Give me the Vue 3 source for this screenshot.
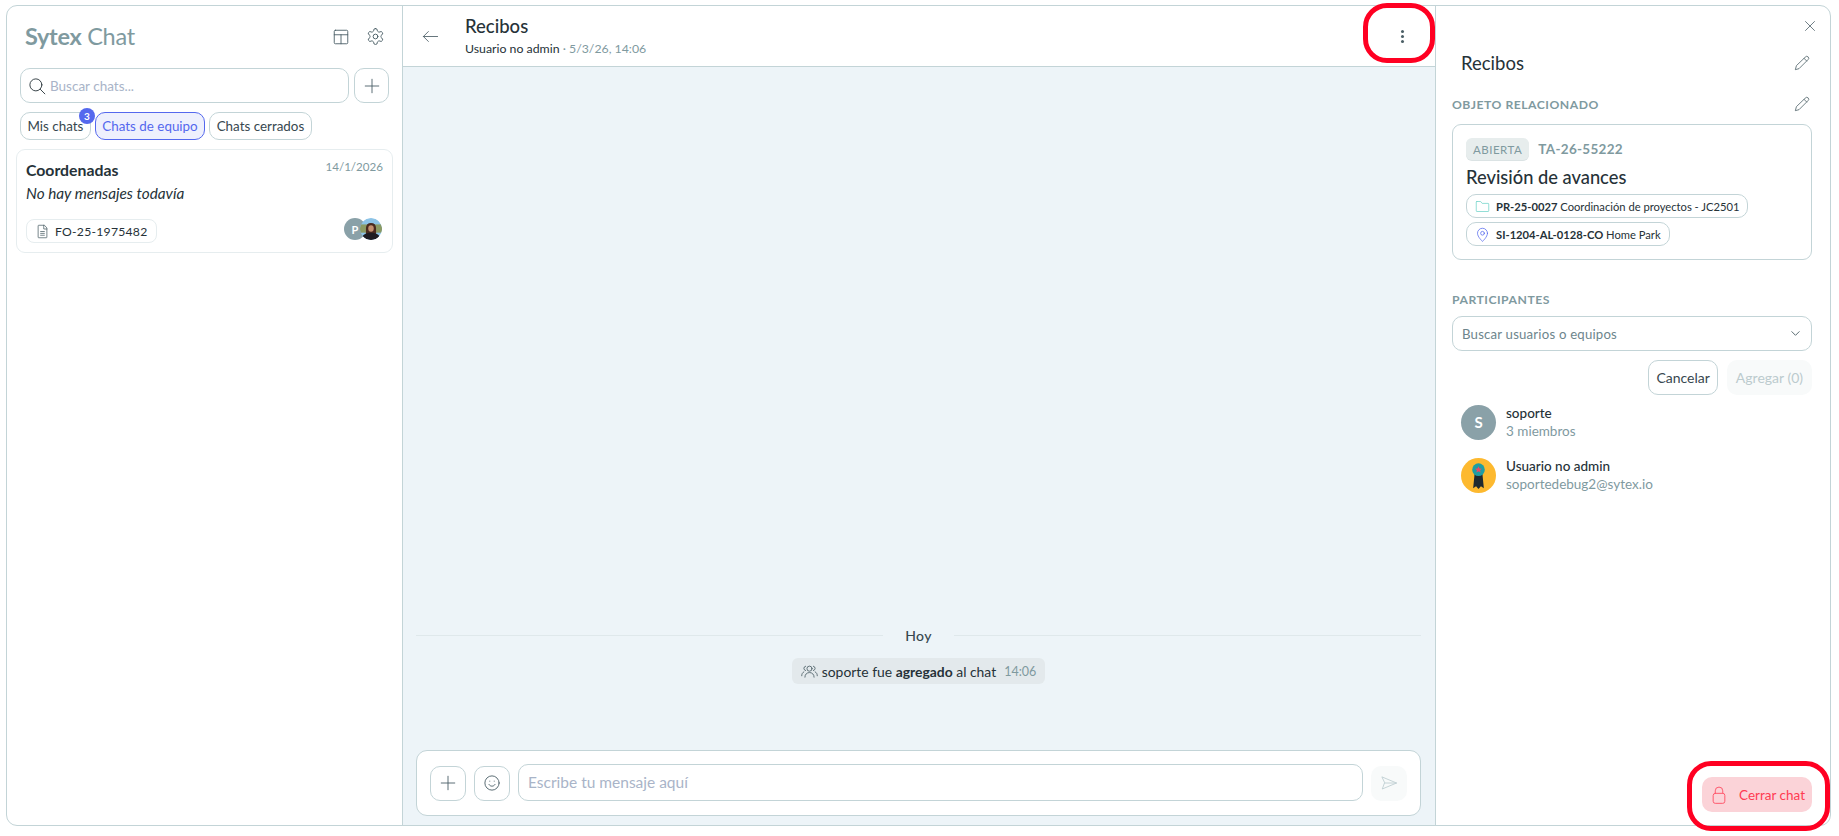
<template>
  <div class="page">
    <div class="frame">
      <aside class="chat-list">
        <header class="list-head">
          <div class="brand"><b>Sytex</b> Chat</div>
          <div class="head-icons">
            <svg class="icon" viewBox="0 0 24 24"><rect x="3" y="3" width="18" height="18" rx="1.5"/><path d="M3 9h18M12 9v12"/></svg>
            <svg class="icon gear" viewBox="0 0 24 24"><path d="M12.22 2h-.44a2 2 0 0 0-2 2v.18a2 2 0 0 1-1 1.73l-.43.25a2 2 0 0 1-2 0l-.15-.08a2 2 0 0 0-2.73.73l-.22.38a2 2 0 0 0 .73 2.73l.15.1a2 2 0 0 1 1 1.72v.51a2 2 0 0 1-1 1.74l-.15.09a2 2 0 0 0-.73 2.73l.22.38a2 2 0 0 0 2.73.73l.15-.08a2 2 0 0 1 2 0l.43.25a2 2 0 0 1 1 1.73V20a2 2 0 0 0 2 2h.44a2 2 0 0 0 2-2v-.18a2 2 0 0 1 1-1.73l.43-.25a2 2 0 0 1 2 0l.15.08a2 2 0 0 0 2.73-.73l.22-.39a2 2 0 0 0-.73-2.73l-.15-.08a2 2 0 0 1-1-1.74v-.5a2 2 0 0 1 1-1.74l.15-.09a2 2 0 0 0 .73-2.73l-.22-.38a2 2 0 0 0-2.73-.73l-.15.08a2 2 0 0 1-2 0l-.43-.25a2 2 0 0 1-1-1.73V4a2 2 0 0 0-2-2z"/><circle cx="12" cy="12" r="3"/></svg>
          </div>
        </header>

        <div class="search-row">
          <div class="search">
            <svg class="icon search-icon" viewBox="0 0 24 24"><circle cx="10.5" cy="10.5" r="8"/><path d="m16.500 16.500 6 6"/></svg>
            <span class="placeholder">Buscar chats...</span>
          </div>
          <button class="square-btn">
            <svg class="icon" viewBox="0 0 24 24"><path d="M12 3v18M3 12h18"/></svg>
          </button>
        </div>

        <div class="tabs">
          <div v-for="tab in tabs" :key="tab.label" class="tab" :class="{ active: tab.active }">
            {{ tab.label }}
            <span v-if="tab.badge" class="badge">{{ tab.badge }}</span>
          </div>
        </div>

        <div class="chat-card">
          <div class="card-top">
            <span class="card-title">Coordenadas</span>
            <span class="card-date">14/1/2026</span>
          </div>
          <div class="card-msg">No hay mensajes todavía</div>
          <div class="card-bottom">
            <div class="form-chip">
              <svg class="icon chip-file" viewBox="0 0 24 24"><path d="M14.500 2H6a1 1 0 0 0-1 1v18a1 1 0 0 0 1 1h12a1 1 0 0 0 1-1V7z"/><path d="M14 2v6h5M9 12h6M9 15h6M9 18h6"/></svg>
              FO-25-1975482
            </div>
            <div class="avatars">
              <span class="mini-avatar">P</span>
              <svg class="mini-photo" viewBox="0 0 24 24">
                <defs><clipPath id="photoClip"><circle cx="12" cy="12" r="12"/></clipPath></defs>
                <g clip-path="url(#photoClip)">
                  <rect width="24" height="24" fill="#8cc3e6"/>
                  <rect y="7" width="24" height="9" fill="#8b9a63"/>
                  <path d="M6.500 22V11c0-3.500 2-5.500 5.500-5.500s5.500 2 5.500 5.500v11z" fill="#4a2a20"/>
                  <ellipse cx="12" cy="11.500" rx="3" ry="3.600" fill="#c4906f"/>
                  <path d="M1 24c1-5.500 5-8 11-8s10 2.500 11 8z" fill="#1d1c22"/>
                </g>
              </svg>
            </div>
          </div>
        </div>
      </aside>

      <main class="chat">
        <header class="chat-head">
          <svg class="icon back" viewBox="0 0 24 24"><path d="M22 12H2M9 5l-7 7 7 7"/></svg>
          <div class="chat-info">
            <div class="chat-title">Recibos</div>
            <div class="chat-sub">Usuario no admin <span class="muted">· 5/3/26, 14:06</span></div>
          </div>
          <div class="dots"><i></i><i></i><i></i></div>
        </header>

        <div class="messages">
          <div class="day">
            <span class="day-line"></span>
            <span class="day-text">Hoy</span>
            <span class="day-line"></span>
          </div>
          <div class="event">
            <svg class="icon event-icon" viewBox="0 0 24 24"><circle cx="12" cy="8" r="3.600"/><path d="M5.500 20c0-4 2.800-6.500 6.500-6.500s6.500 2.500 6.500 6.500M6.500 4.500a3.200 3.200 0 0 0 0 6.200M17.500 4.500a3.200 3.200 0 0 1 0 6.200M1 18c0-2.500 1-4.500 3-5.500M23 18c0-2.500-1-4.500-3-5.500"/></svg>
            <span>soporte fue <b>agregado</b> al chat</span>
            <span class="event-time">14:06</span>
          </div>
        </div>

        <div class="composer">
          <button class="square-btn">
            <svg class="icon" viewBox="0 0 24 24"><path d="M12 3v18M3 12h18"/></svg>
          </button>
          <button class="square-btn">
            <svg class="icon" viewBox="0 0 24 24"><circle cx="12" cy="12" r="9.500"/><path d="M8 14c1 1.500 2.400 2.200 4 2.200s3-.7 4-2.200M9 9.500v.1M15 9.500v.1"/></svg>
          </button>
          <div class="msg-input">Escribe tu mensaje aquí</div>
          <button class="send-btn">
            <svg class="icon send" viewBox="0 0 24 24"><path d="M3 4l19 8-19 8 3-8zM6 12h16"/></svg>
          </button>
        </div>
      </main>

      <aside class="details">
        <svg class="icon close" viewBox="0 0 24 24"><path d="M3 3l18 18M21 3 3 21"/></svg>
        <div class="detail-title">
          <span>Recibos</span>
          <svg class="icon" viewBox="0 0 24 24"><path d="M17 3a2.850 2.830 0 1 1 4 4L7.500 20.500 2 22l1.500-5.500Z"/><path d="m15 5 4 4"/></svg>
        </div>

        <div class="section-head">
          <span>OBJETO RELACIONADO</span>
          <svg class="icon" viewBox="0 0 24 24"><path d="M17 3a2.850 2.830 0 1 1 4 4L7.500 20.500 2 22l1.500-5.500Z"/><path d="m15 5 4 4"/></svg>
        </div>

        <div class="object-card">
          <div class="object-top">
            <span class="status">ABIERTA</span>
            <span class="code">TA-26-55222</span>
          </div>
          <div class="object-name">Revisión de avances</div>
          <div class="link-chip">
            <svg class="icon folder" viewBox="0 0 24 24"><path d="M3 4h6l2.500 3H21a1 1 0 0 1 1 1v11a1 1 0 0 1-1 1H3a1 1 0 0 1-1-1V5a1 1 0 0 1 1-1z"/></svg>
            <span><b>PR-25-0027</b> Coordinación de proyectos - JC2501</span>
          </div>
          <div class="link-chip">
            <svg class="icon pin" viewBox="0 0 24 24"><path d="M20 10c0 6-8 13-8 13s-8-7-8-13a8 8 0 0 1 16 0z"/><circle cx="12" cy="10" r="3"/></svg>
            <span><b>SI-1204-AL-0128-CO</b> Home Park</span>
          </div>
        </div>

        <div class="section-head participants">PARTICIPANTES</div>
        <div class="select">
          <span>Buscar usuarios o equipos</span>
          <svg class="icon chevron" viewBox="0 0 24 24"><path d="m4 8 8 8 8-8"/></svg>
        </div>
        <div class="actions">
          <button class="btn">Cancelar</button>
          <button class="btn disabled">Agregar (0)</button>
        </div>

        <div v-for="p in people" :key="p.name" class="person">
          <span v-if="p.initial" class="avatar">{{ p.initial }}</span>
          <svg v-else class="avatar-ribbon" viewBox="0 0 36 36">
            <circle cx="18" cy="18" r="18" fill="#fdb92f"/>
            <path d="M14 16 12.500 31l3-2 2.500 3 2.500-3 3 2L22 16z" fill="#1f2a30"/>
            <circle cx="18" cy="12" r="6.500" fill="#1e9ea3"/>
            <path d="m18 8.500 1 2.300 2.500.2-1.900 1.600.6 2.400-2.200-1.300-2.200 1.300.6-2.400-1.900-1.600 2.500-.2z" fill="#ef4765"/>
          </svg>
          <div class="person-text">
            <div class="person-name">{{ p.name }}</div>
            <div class="person-sub">{{ p.sub }}</div>
          </div>
        </div>

        <div class="detail-foot">
          <button class="close-chat">
            <svg class="icon lock" viewBox="0 0 24 24"><rect x="5" y="10" width="14" height="12" rx="2.500"/><path d="M7.500 10V7a4.500 4.500 0 0 1 9 0v3"/></svg>
            Cerrar chat
          </button>
        </div>
      </aside>
    </div>

    <!-- red marks drawn over the screenshot -->
    <span class="mark mark-menu"></span>
    <span class="mark mark-close"></span>
  </div>
</template>

<script setup>
const tabs = [
  { label: 'Mis chats', badge: 3 },
  { label: 'Chats de equipo', active: true },
  { label: 'Chats cerrados' }
]

const people = [
  { name: 'soporte', sub: '3 miembros', initial: 'S' },
  { name: 'Usuario no admin', sub: 'soportedebug2@sytex.io' }
]
</script>

<style>
html, body {
  margin: 0;
  background: #fff;
}
</style>

<style scoped>
.page {
  position: relative;
  box-sizing: border-box;
  width: 1839px;
  height: 836px;
  padding: 5px 8px 10px 6px;
  font-family: Lato, "Open Sans", sans-serif;
  font-size: 14px;
  color: #263238;
  overflow: hidden;
}

.frame {
  box-sizing: border-box;
  height: 100%;
  display: grid;
  grid-template-columns: 396px 1033px 1fr;
  border: 1px solid #c3d4d7;
  border-radius: 11px;
  overflow: hidden;
}

button {
  font-family: inherit;
  padding: 0;
  background: none;
  cursor: pointer;
}

.icon {
  width: 18px;
  height: 18px;
  fill: none;
  stroke: #4b5f66;
  stroke-width: 1.2;
  stroke-linecap: round;
  stroke-linejoin: round;
  flex: none;
}

/* left column */
.chat-list {
  padding: 0 9px;
  border-right: 1px solid #c3d4d7;
}

.list-head {
  display: flex;
  align-items: center;
  justify-content: space-between;
  height: 59px;
  padding: 0 8px 0 9px;
}

.brand {
  font-size: 23.500px;
  color: #7f9a9f;
  letter-spacing: -0.3px;
}

.brand b {
  font-weight: 700;
}

.head-icons {
  display: flex;
  align-items: center;
  gap: 16px;
  margin-top: 2px;
}

.gear {
  width: 19px;
  height: 19px;
}

.search-row {
  display: flex;
  gap: 5px;
  padding: 3px 4px 0;
}

.search-row .square-btn {
  width: 35px;
}

.search {
  flex: 1;
  height: 35px;
  box-sizing: border-box;
  display: flex;
  align-items: center;
  gap: 4px;
  padding-left: 7px;
  border: 1px solid #c3d4d7;
  border-radius: 10px;
}

.search-icon {
  stroke: #263238;
}

.placeholder {
  color: #a9b4c8;
  font-size: 13.500px;
}

.square-btn {
  width: 36px;
  height: 35px;
  box-sizing: border-box;
  display: flex;
  align-items: center;
  justify-content: center;
  border: 1px solid #c3d4d7;
  border-radius: 10px;
  flex: none;
}

.tabs {
  display: flex;
  gap: 4px;
  padding: 9px 4px 0;
}

.tab {
  position: relative;
  box-sizing: border-box;
  height: 28px;
  padding: 0 6.500px;
  display: flex;
  align-items: center;
  font-size: 13.400px;
  color: #37474f;
  border: 1px solid #c3d4d7;
  border-radius: 10px;
}

.tab.active {
  color: #5468ee;
  background: #eef0fd;
  border-color: #5468ee;
}

.badge {
  position: absolute;
  top: -5px;
  right: -5px;
  width: 16px;
  height: 16px;
  display: flex;
  align-items: center;
  justify-content: center;
  border-radius: 50%;
  background: #5468ee;
  color: #fff;
  font-size: 10px;
  font-weight: 700;
}

.chat-card {
  box-sizing: border-box;
  height: 104px;
  margin-top: 9px;
  padding: 9px 9px;
  border: 1px solid #e6edef;
  border-radius: 9px;
}

.card-top {
  display: flex;
  justify-content: space-between;
}

.card-title {
  font-size: 15.800px;
  font-weight: 700;
  margin-top: 1px;
}

.card-date {
  font-size: 11.600px;
  color: #7f9a9f;
  margin-top: 1px;
}

.card-msg {
  margin-top: 5px;
  font-style: italic;
  font-size: 15.300px;
}

.card-bottom {
  display: flex;
  align-items: center;
  justify-content: space-between;
  margin-top: 17px;
}

.form-chip {
  box-sizing: border-box;
  height: 24px;
  display: flex;
  align-items: center;
  gap: 5px;
  padding: 0 8px;
  font-size: 12.200px;
  letter-spacing: 0.25px;
  border: 1px solid #e6edef;
  border-radius: 8px;
}

.chip-file {
  width: 15px;
  height: 15px;
}

.avatars {
  display: flex;
  padding-right: 1px;
  margin-top: -4px;
}

.mini-avatar,
.mini-photo {
  width: 22px;
  height: 22px;
  border-radius: 50%;
}

.mini-avatar {
  display: flex;
  align-items: center;
  justify-content: center;
  background: #8aa1a8;
  color: #fff;
  font-size: 11px;
  font-weight: 700;
}

.mini-photo {
  margin-left: -6px;
}

/* middle column */
.chat {
  display: flex;
  flex-direction: column;
  min-width: 0;
  background: #edf4f8;
  border-right: 1px solid #c3d4d7;
}

.chat-head {
  box-sizing: border-box;
  height: 61px;
  flex: none;
  display: flex;
  align-items: center;
  padding: 0 31px 0 19px;
  background: #fff;
  border-bottom: 1px solid #c3d4d7;
}

.back {
  width: 17px;
  height: 17px;
  margin-top: 1px;
}

.chat-info {
  margin-left: 26px;
  flex: 1;
}

.chat-title {
  font-size: 18.500px;
  font-weight: 500;
  line-height: 24px;
}

.chat-sub {
  font-size: 12.300px;
  line-height: 18px;
  margin-top: 2px;
}

.muted {
  color: #7f9a9f;
}

.dots {
  display: flex;
  flex-direction: column;
  gap: 2px;
}

.dots i {
  width: 3px;
  height: 3px;
  border-radius: 50%;
  background: #4b5f66;
}

.messages {
  flex: 1;
  display: flex;
  flex-direction: column;
  align-items: center;
  justify-content: flex-end;
  padding: 0 14px 66px 13px;
}

.day {
  align-self: stretch;
  display: flex;
  align-items: center;
  gap: 22px;
  font-size: 14px;
  font-weight: 500;
  letter-spacing: 0.4px;
  color: #37474f;
}

.day-line {
  flex: 1;
  height: 1px;
  background: #dfe8eb;
}

.event {
  box-sizing: border-box;
  height: 26px;
  margin-top: 14px;
  display: flex;
  align-items: center;
  gap: 4px;
  padding: 0 9px;
  font-size: 13.900px;
  background: #e3e9ec;
  border-radius: 6px;
}

.event-icon {
  width: 17px;
  height: 17px;
}

.event-time {
  margin-left: 4px;
  font-size: 12.500px;
  color: #7f9a9f;
}

.composer {
  box-sizing: border-box;
  height: 66px;
  margin: 0 14px 9px 13px;
  flex: none;
  display: flex;
  align-items: center;
  gap: 8px;
  padding: 0 13px 0 13px;
  background: #fff;
  border: 1px solid #c3d4d7;
  border-radius: 11px;
}

.msg-input {
  flex: 1;
  height: 37px;
  box-sizing: border-box;
  display: flex;
  align-items: center;
  padding-left: 9px;
  color: #a9b4c8;
  font-size: 15.500px;
  border: 1px solid #c3d4d7;
  border-radius: 10px;
  margin-top: -2px;
}

.send-btn {
  width: 36px;
  height: 35px;
  border: 0;
  background: #f8fafa;
  border-radius: 10px;
  display: flex;
  align-items: center;
  justify-content: center;
}

.send {
  stroke: #c0cfd2;
}

/* right column */
.details {
  position: relative;
  display: flex;
  flex-direction: column;
  padding: 0 18px 0 16px;
}

.close {
  position: absolute;
  top: 14px;
  right: 14px;
  width: 12px;
  height: 12px;
  stroke-width: 1.800;
  stroke: #607078;
}

.detail-title {
  display: flex;
  align-items: center;
  justify-content: space-between;
  height: 24px;
  margin-top: 45px;
  padding: 0 2px 0 9px;
  font-size: 18.500px;
}

.detail-title .icon,
.section-head .icon {
  width: 16px;
  height: 16px;
}

.section-head {
  display: flex;
  align-items: center;
  justify-content: space-between;
  margin-top: 21px;
  padding-right: 2px;
  height: 16px;
  font-size: 12.200px;
  font-weight: 700;
  letter-spacing: 0.5px;
  color: #7f9a9f;
}

.object-card {
  box-sizing: border-box;
  height: 136px;
  margin-top: 12px;
  padding: 13px 13px;
  border: 1px solid #c3d4d7;
  border-radius: 9px;
}

.object-top {
  display: flex;
  align-items: center;
  gap: 9px;
}

.status {
  box-sizing: border-box;
  height: 22px;
  padding: 0 7px;
  display: flex;
  align-items: center;
  font-size: 11.500px;
  letter-spacing: 0.5px;
  color: #7f9a9f;
  background: #e7eded;
  border-radius: 6px;
  box-shadow: 0 1px 0 #dbe3e4;
}

.code {
  font-size: 13.500px;
  font-weight: 700;
  letter-spacing: 0.3px;
  color: #7f9a9f;
}

.object-name {
  margin-top: 4px;
  font-size: 18.300px;
  font-weight: 500;
  line-height: 26px;
}

.link-chip {
  box-sizing: border-box;
  width: fit-content;
  height: 24px;
  margin-top: 4px;
  display: flex;
  align-items: center;
  gap: 6px;
  padding: 0 8px;
  font-size: 11.200px;
  border: 1px solid #c3d4d7;
  border-radius: 10px;
}

.link-chip:first-of-type {
  margin-top: 2px;
}

.folder {
  width: 15px;
  height: 15px;
  stroke: #6fd3c8;
}

.pin {
  width: 15px;
  height: 15px;
  stroke: #5468ee;
}

.participants {
  margin-top: 31px;
}

.select {
  box-sizing: border-box;
  height: 35px;
  margin-top: 9px;
  padding: 0 10px 0 9px;
  display: flex;
  align-items: center;
  justify-content: space-between;
  color: #6d858c;
  font-size: 13.200px;
  letter-spacing: 0.2px;
  border: 1px solid #c3d4d7;
  border-radius: 10px;
}

.chevron {
  width: 11px;
  height: 11px;
  stroke-width: 2;
}

.actions {
  display: flex;
  justify-content: flex-end;
  gap: 9px;
  margin-top: 9px;
}

.btn {
  box-sizing: border-box;
  height: 35px;
  padding: 0 7px;
  font-size: 14px;
  color: #37474f;
  border: 1px solid #c3d4d7;
  border-radius: 10px;
}

.btn.disabled {
  border: 0;
  padding: 0 9px;
  color: #bccbce;
  background: #f8fafa;
}

.person {
  display: flex;
  align-items: center;
  gap: 10px;
  margin-top: 9px;
  padding-left: 9px;
}

.person + .person {
  margin-top: 17px;
}

.avatar {
  width: 35px;
  height: 35px;
  display: flex;
  align-items: center;
  justify-content: center;
  border-radius: 50%;
  background: #8aa1a8;
  color: #fff;
  font-size: 15px;
  font-weight: 700;
}

.avatar-ribbon {
  width: 35px;
  height: 35px;
  flex: none;
}

.person-text {
  font-size: 13.500px;
  line-height: 18px;
}

.person-name {
  font-weight: 500;
}

.person-sub {
  color: #7f9a9f;
  font-size: 13.500px;
}

.detail-foot {
  margin-top: auto;
  padding-bottom: 13px;
  display: flex;
  justify-content: flex-end;
}

.close-chat {
  box-sizing: border-box;
  width: 110px;
  height: 35px;
  display: flex;
  align-items: center;
  justify-content: center;
  gap: 10px;
  border: 0;
  color: #ff3b52;
  font-size: 13.500px;
  background: #fbd3d8;
  border-radius: 10px;
}

.lock {
  width: 20px;
  height: 20px;
  stroke: #ff5a6e;
}

/* red annotations */
.mark {
  position: absolute;
  box-sizing: border-box;
  border: 5px solid #ff0022;
  border-radius: 24px;
  pointer-events: none;
}

.mark-menu {
  left: 1363px;
  top: 3px;
  width: 72px;
  height: 60px;
}

.mark-close {
  left: 1687px;
  top: 761px;
  width: 143px;
  height: 70px;
}
</style>
